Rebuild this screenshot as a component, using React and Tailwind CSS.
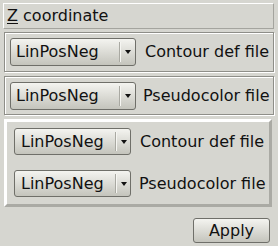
import React from "react";

// combo box: label + separator + tiny arrow
function Combo({ w, h, pl, sep }) {
  return (
    <div
      className="relative flex items-center shrink-0 rounded-[3px] border border-[#6f6f69] bg-gradient-to-b from-[#f4f4f0] to-[#c4c4bc] text-[#111]"
      style={{ width: w, height: h, paddingLeft: pl }}
    >
      <span className="leading-none">LinPosNeg</span>
      <span
        className="absolute top-[3px] bottom-[3px] w-[2px] border-l border-[#a9a9a2] bg-[#f6f6f2]"
        style={{ left: sep }}
      />
      <span
        className="absolute top-1/2 -translate-y-1/2 w-0 h-0 border-l-[3px] border-r-[3px] border-t-[4px] border-l-transparent border-r-transparent border-t-[#111]"
        style={{ left: sep + 6 }}
      />
    </div>
  );
}

export default function App() {
  return (
    <div className="w-[278px] h-[246px] overflow-hidden bg-[#d6d6d0] font-['DejaVu_Sans',sans-serif] text-[16px] text-[#111] pt-[3px] pl-[3px]">
      {/* Z coordinate header */}
      <div className="w-[271px] h-[26px] border border-t-white border-l-white border-r-[#a4a49e] border-b-[#a4a49e] flex items-center pl-[3px]">
        <span className="leading-none">
          <span className="underline underline-offset-2">Z</span> coordinate
        </span>
      </div>

      {/* contour row */}
      <div className="mt-[3px] ml-[1px] w-[270px] h-[40px] border border-[#8e8e88] shadow-[1px_1px_0_#fff,inset_1px_1px_0_#fff] flex items-center pl-[5px]">
        <Combo w={126} h={28} pl={5} sep={108} />
        <span className="ml-[9px] leading-none">Contour def file</span>
      </div>

      {/* pseudocolor row */}
      <div className="mt-[4px] ml-[1px] w-[270px] h-[39px] border border-[#8e8e88] shadow-[1px_1px_0_#fff,inset_1px_1px_0_#fff] flex items-center pl-[5px]">
        <Combo w={126} h={28} pl={5} sep={108} />
        <span className="ml-[7px] leading-none">Pseudocolor file</span>
      </div>

      {/* raised group */}
      <div className="mt-[4px] ml-[1px] w-[268px] h-[88px] border-[3px] border-t-white border-l-white border-r-[#aaaaa4] border-b-[#aaaaa4] flex flex-col pl-[7px] pt-[6px] gap-[15px]">
        <div className="flex items-center">
          <Combo w={117} h={27} pl={6} sep={100} />
          <span className="ml-[9px] leading-none">Contour def file</span>
        </div>
        <div className="flex items-center">
          <Combo w={117} h={27} pl={6} sep={100} />
          <span className="ml-[8px] leading-none">Pseudocolor file</span>
        </div>
      </div>

      <div className="flex justify-end pr-[8px] mt-[11px]">
        <button className="w-[77px] h-[25px] rounded-[3px] border border-[#6f6f69] bg-gradient-to-b from-[#f4f4f0] to-[#c4c4bc] flex items-center justify-center leading-none">
          Apply
        </button>
      </div>
    </div>
  );
}
